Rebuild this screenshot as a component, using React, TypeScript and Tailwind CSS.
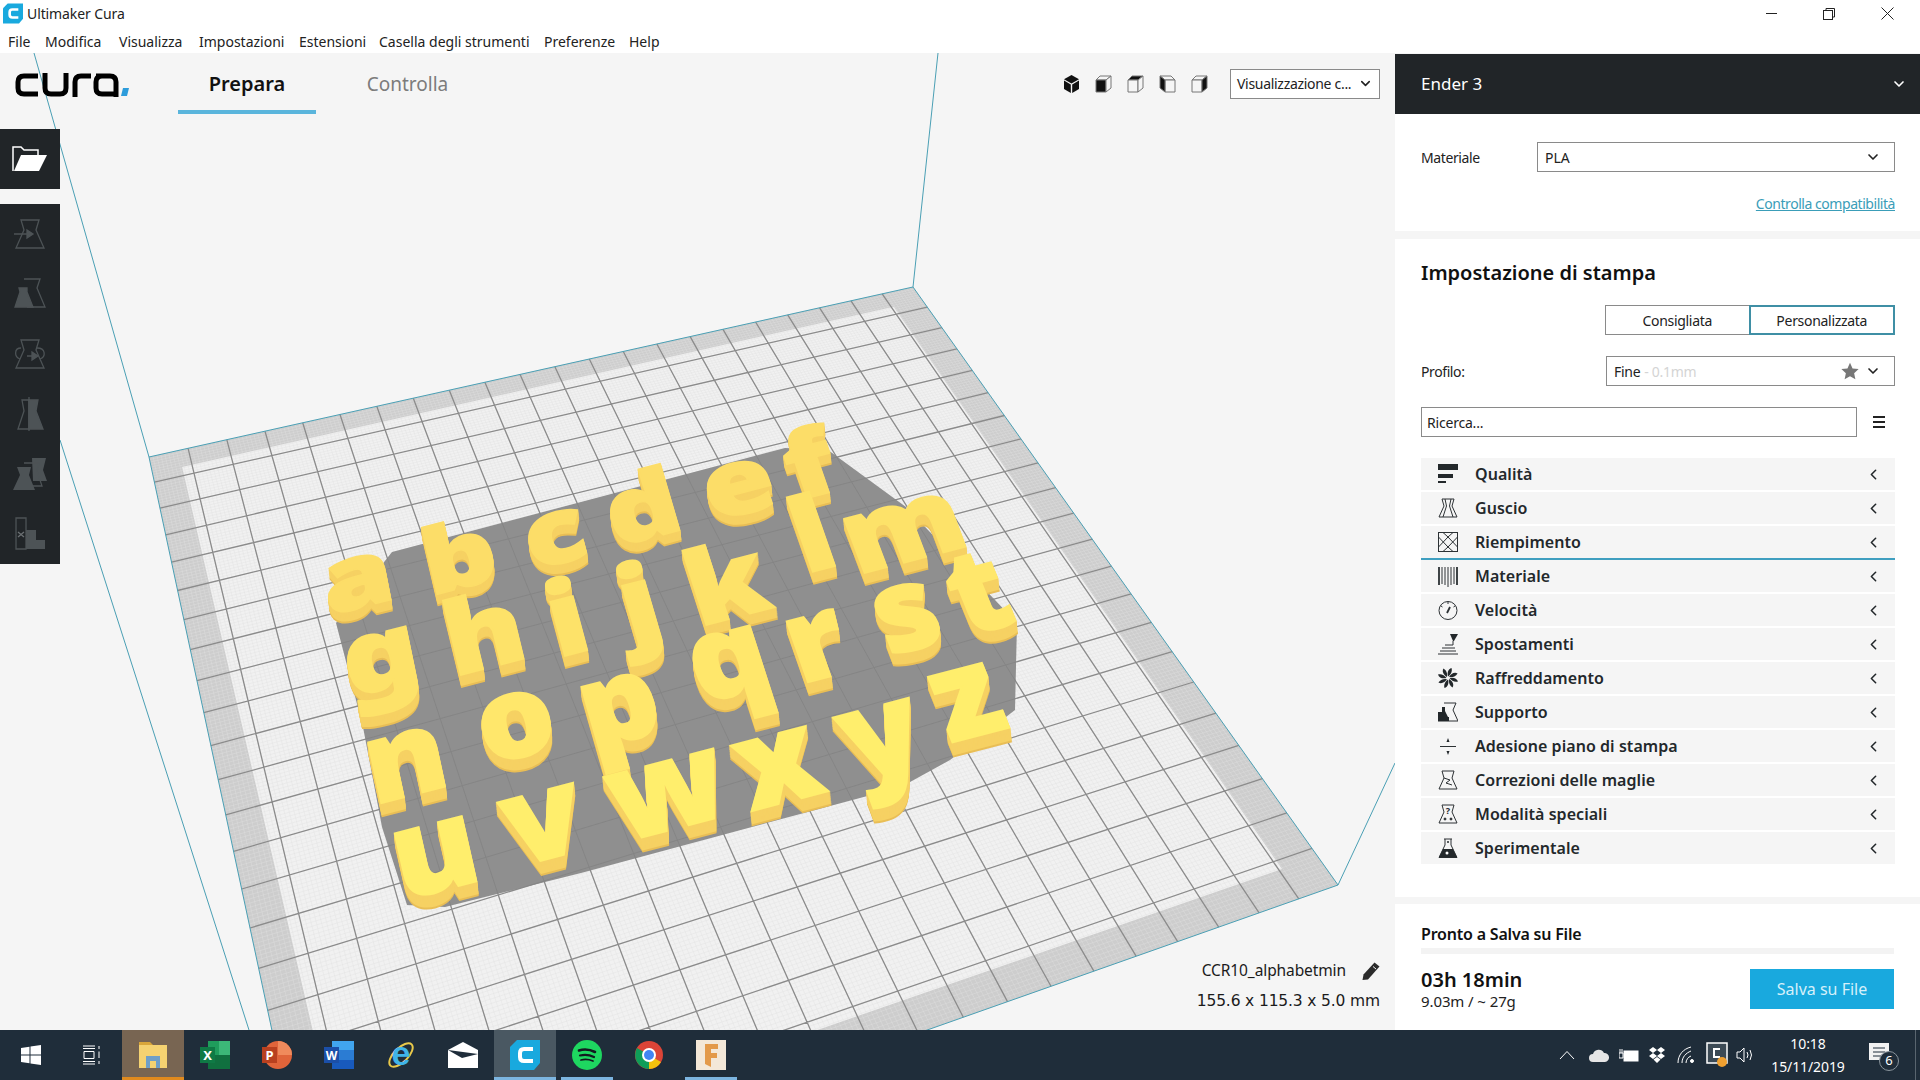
import { ChevronDown, ChevronLeft } from "lucide-react";
import type { ReactNode } from "react";

// bed corners as they land on the page: back-left, back-right, front-right, front-left
const BED = [[149, 457], [913, 287], [1338, 885], [318, 1245]];

function makeProject(q: number[][]) {
  const [[x0, y0], [x1, y1], [x2, y2], [x3, y3]] = q;
  const dx1 = x1 - x2, dx2 = x3 - x2, sx = x0 - x1 + x2 - x3;
  const dy1 = y1 - y2, dy2 = y3 - y2, sy = y0 - y1 + y2 - y3;
  const den = dx1 * dy2 - dx2 * dy1;
  const g = (sx * dy2 - dx2 * sy) / den;
  const h = (dx1 * sy - sx * dy1) / den;
  const a = x1 - x0 + g * x1, b = x3 - x0 + h * x3;
  const d = y1 - y0 + g * y1, e = y3 - y0 + h * y3;
  return (u: number, v: number) => {
    const w = g * u + h * v + 1;
    return [(a * u + b * v + x0) / w, (d * u + e * v + y0) / w];
  };
}
const project = makeProject(BED);

const quad = (u0: number, v0: number, u1: number, v1: number) =>
  [project(u0, v0), project(u1, v0), project(u1, v1), project(u0, v1)].map((p) => p.join(",")).join(" ");

const fine = Array.from({ length: 221 }, (_, i) => i / 220);
const major = Array.from({ length: 21 }, (_, i) => (i + 1) / 22);

const segment = (a: number[], b: number[]) => `M${a[0].toFixed(1)} ${a[1].toFixed(1)}L${b[0].toFixed(1)} ${b[1].toFixed(1)}`;
const finePath = fine.map((t) => segment(project(t, 0), project(t, 1)) + segment(project(0, t), project(1, t))).join("");
const majorPath = major.map((t) => segment(project(t, 0), project(t, 1)) + segment(project(0, t), project(1, t))).join("");

const SHADOW = "392,552 785,448 828,450 906,507 1017,623 1015,710 950,760 901,787 581,873 445,907 407,905 382,827 363,727 336,623";

type Letter = [string, number, number, number];
// char, x, y of the baseline on the top face, row
const LETTERS: Letter[] = [
  ["f", 820, 495, 0], ["e", 747, 513, 0], ["d", 651, 538, 0], ["c", 562, 563, 0], ["b", 466, 587, 0], ["a", 363, 607, 0],
  ["m", 915, 560, 1], ["l", 824, 569, 1], ["k", 737, 617, 1], ["j", 649, 637, 1], ["i", 576, 653, 1], ["h", 492, 667, 1], ["g", 387, 688, 1],
  ["t", 993, 629, 2], ["s", 919, 648, 2], ["r", 828, 677, 2], ["q", 739, 694, 2], ["p", 629, 740, 2], ["o", 524, 756, 2], ["n", 413, 795, 2],
  ["z", 981, 735, 3], ["y", 895, 773, 3], ["x", 790, 801, 3], ["w", 678, 828, 3], ["v", 552, 858, 3], ["u", 443, 890, 3],
];
const ROW_SX = [1.12, 1.16, 1.18, 1.24];
const ROW_SY = [0.88, 0.98, 1.1, 1.18];
const ROW_DEPTH = [11, 12, 13, 14];
const ROW_TOP = ["#fcdd68", "#fde269", "#ffe76b", "#ffee6c"];

function Letter({ l }: { l: Letter }) {
  const [ch, x, y, row] = l;
  const sx = ROW_SX[row], sy = ROW_SY[row];
  const shear = 0.2 + ((x - 365) / 614) * 0.2;
  const at = (off: number) => `matrix(${sx} ${-0.26 * sx} ${shear * sy} ${sy} ${x + off * 0.1} ${y + off})`;
  const depth = Array.from({ length: ROW_DEPTH[row] }, (_, i) => ROW_DEPTH[row] - i);
  return (
    <g fontFamily="'Noto Sans', sans-serif" fontWeight={900} fontSize={100} textAnchor="middle" strokeWidth={1.5} strokeLinejoin="miter">
      {depth.map((off) => {
        const c = off > ROW_DEPTH[row] - 2 ? "#e9be56" : "#f6d163";
        return <text key={off} transform={at(off)} fill={c} stroke={c}>{ch}</text>;
      })}
      <text transform={at(0)} fill={ROW_TOP[row]} stroke={ROW_TOP[row]}>{ch}</text>
    </g>
  );
}

function Scene() {
  return (
    <svg className="absolute left-0 -top-[53px]" width={1920} height={1080} viewBox="0 0 1920 1080">
      <defs>
        <clipPath id="shadow-clip"><polygon points={SHADOW} /></clipPath>
      </defs>
      <polygon points={BED.map((p) => p.join(",")).join(" ")} fill="#cdcdcd" />
      <polygon points={quad(0.034, 0.03, 0.958, 0.965)} fill="#f1f1f1" />
      <path d={finePath} stroke="#e0e0e0" strokeWidth={0.4} fill="none" />
      <path d={majorPath} stroke="#8b8b8b" strokeWidth={1.3} fill="none" />
      <polygon points={BED.map((p) => p.join(",")).join(" ")} fill="none" stroke="#4a9fb4" strokeWidth={1} />
      <path d="M149 457L34 53M913 287L938 53M1338 885L1395 763M60 440L249 1030" stroke="#4a9fb4" strokeWidth={1} fill="none" />
      <polygon points={SHADOW} fill="#8f8f8f" />
      <path d={majorPath} stroke="#858585" strokeWidth={1} fill="none" clipPath="url(#shadow-clip)" />
      {LETTERS.map((l) => <Letter key={l[0]} l={l} />)}
    </svg>
  );
}

function CuraLogo() {
  return (
    <svg width={116} height={24} viewBox="0 0 116 24" fill="none" stroke="#000" strokeWidth={5}>
      <path d="M23 3H9q-6 0-6 6v6q0 6 6 6H23" />
      <path d="M30 0v15q0 6 6 6h9q6 0 6-6V0" />
      <path d="M60 24V9q0-6 6-6h10" />
      <path d="M81 3h14q6 0 6 6v15M101 21H87q-6 0-6-6V9q0-6 6-6" />
      <path d="M108 15h6l-2 8h-6z" fill="#2d9cdb" stroke="none" />
    </svg>
  );
}

// the little print model shape used all over the side bars
const VASE = "M6 1H24L21 11L29 29H1L9 11Z";

function ToolIcon({ children }: { children: ReactNode }) {
  return (
    <div className="flex h-[60px] w-[60px] items-center justify-center">
      <svg width={34} height={34} viewBox="0 0 34 34" fill="none" stroke="#4d5356" strokeWidth={1.3}>{children}</svg>
    </div>
  );
}

function Toolbar() {
  return (
    <div className="ml-0 mt-[15px] flex w-[60px] flex-col gap-[15px]">
      <div className="flex h-[60px] items-center justify-center bg-[#212528]">
        <svg width={36} height={26} viewBox="0 0 36 26">
          <path d="M1 25V1h8l3 3h14v5" fill="none" stroke="#fff" strokeWidth={1.5} />
          <path d="M9 9H35L27 25H2Z" fill="#fff" />
        </svg>
      </div>
      <div className="flex h-[360px] flex-col bg-[#212528]">
        <ToolIcon>
          <path transform="translate(2 2)" d={VASE} />
          <path d="M1 17H19M14 13l6 4-6 4z" fill="#4d5356" />
        </ToolIcon>
        <ToolIcon>
          <path d="M11 2H27L24 11L32 30H14" />
          <path d="M6 11H14V15L20 30H2L7 15Z" fill="#4d5356" />
        </ToolIcon>
        <ToolIcon>
          <path transform="translate(2 2)" d={VASE} />
          <path d="M8 11C1 11 1 20 7 22M24 11C33 11 33 20 27 22" />
          <path d="M14 19H22M19 15l6 4-6 4z" fill="#4d5356" />
        </ToolIcon>
        <ToolIcon>
          <path d="M9 3H16V32H5L11 14Z" />
          <path d="M16 3H25L23 14L30 32H16Z" fill="#4d5356" />
          <path d="M16 0V34" />
        </ToolIcon>
        <ToolIcon>
          <path d="M19 1H33L30 13L34 24H20Z" fill="#4d5356" stroke="none" />
          <path d="M11 6H26L24 14L29 29H12" />
          <path d="M4 10H18L16 18L22 33H0L7 18Z" fill="#4d5356" stroke="none" />
        </ToolIcon>
        <ToolIcon>
          <path d="M3 1H13V32H3Z" />
          <path d="M13 13H23V23H32V32H13Z" fill="#4d5356" stroke="none" />
          <path d="M5 15l6 5M11 15l-6 5" stroke="#6b7073" />
        </ToolIcon>
      </div>
    </div>
  );
}

function ViewCube({ top, front, side, flip }: { top?: boolean; front?: boolean; side?: boolean; flip?: boolean }) {
  const on = "#111";
  const off = "#f5f5f5";
  return (
    <svg width={17} height={18} viewBox="0 0 17 18" stroke="#777" strokeWidth={1} className={flip ? "-scale-x-100" : ""}>
      <polygon points="1,5 5,1 16,1 11,5" fill={top ? on : off} />
      <polygon points="1,5 11,5 11,17 1,17" fill={front ? on : off} />
      <polygon points="11,5 16,1 16,13 11,17" fill={side ? on : off} />
    </svg>
  );
}

function ViewControls() {
  return (
    <div className="ml-auto flex h-[30px] items-center">
      <div className="mr-[22px] flex items-center gap-[15px]">
        <svg width={17} height={18} viewBox="0 0 17 18">
          <path d="M8.5 0L16 4.2L8.5 8.4L1 4.2Z" fill="#111" />
          <path d="M1 5.6L7.8 9.5V18L1 14Z" fill="#111" />
          <path d="M16 5.6L9.2 9.5V18L16 14Z" fill="#111" />
        </svg>
        <ViewCube front />
        <ViewCube top />
        <ViewCube side flip />
        <ViewCube side />
      </div>
      <div className="flex h-[30px] w-[150px] items-center justify-between border border-[#8a8a8a] bg-white pl-[6px] pr-[6px] text-[14px] tracking-[-0.3px] text-[#222]">
        <span>Visualizzazione c...</span>
        <ChevronDown size={15} strokeWidth={2.5} />
      </div>
    </div>
  );
}

function Viewport() {
  return (
    <div className="relative h-full w-[1395px] shrink-0 overflow-hidden bg-[#f5f5f5]">
      <Scene />
      <div className="relative flex h-full flex-col">
        <div className="flex h-[61px] items-center pr-[15px]">
          <div className="w-[178px] pl-[15px] pt-[2px]"><CuraLogo /></div>
          <div className="flex h-[61px] w-[138px] items-center justify-center border-b-4 border-[#5ab5dc] pt-[5px] text-[20px] font-semibold text-[#111]">Prepara</div>
          <div className="flex h-[61px] w-[183px] items-center justify-center pt-[5px] pb-1 text-[19px] text-[#7c7c7c]">Controlla</div>
          <ViewControls />
        </div>
        <Toolbar />
        <div className="mt-auto flex flex-col items-end pb-[19px] pr-[15px] text-[#1b1b1b]">
          <div className="mb-[5px] flex h-[30px] items-center gap-[16px]">
            <span className="text-[15.5px] tracking-[-0.1px]">CCR10_alphabetmin</span>
            <svg width={18} height={18} viewBox="0 0 18 18" fill="#2b2b2b">
              <path d="M12.5 0.5L17.5 4.5L6 17.5L0.5 18L1.5 12.5Z" />
              <path d="M11 4.5L14 7" stroke="#f5f5f5" strokeWidth={1} />
            </svg>
          </div>
          <span className="h-[20px] text-[15.5px] leading-[20px] [font-family:'DejaVu_Sans',sans-serif] tracking-[-0.15px]">155.6 x 115.3 x 5.0 mm</span>
        </div>
      </div>
    </div>
  );
}

const S = "#2c3134";
const SETTINGS: { name: string; icon: ReactNode }[] = [
  { name: "Qualità", icon: <g fill="#23282b" stroke="none"><rect x="0" y="0" width="20" height="6" /><rect x="0" y="10" width="15" height="4" /><rect x="0" y="17" width="8" height="2" /></g> },
  { name: "Guscio", icon: <><path d="M4 1H16L14 8L19 19H1L6 8Z" /><path d="M7 1L8.5 8L5 19M13 1L11.5 8L15 19" /></> },
  { name: "Riempimento", icon: <><rect x="0.5" y="0.5" width="19" height="19" /><path d="M0.5 5L10 15L19.5 5M0.5 15L10 5L19.5 15M5 0.5L10 5L15 0.5M5 19.5L10 15L15 19.5" /></> },
  { name: "Materiale", icon: <g><path d="M1 1V19M19 1V19" strokeWidth={1.8} /><path d="M4 1V18M7 1V19M10 1V21M13 1V19M16 1V18" /></g> },
  { name: "Velocità", icon: <><circle cx="10" cy="10.5" r="9" /><path d="M9 13L12 7" strokeWidth={1.8} /><path d="M10 2V4M3 6l1.5 1M17 6l-1.5 1" /></> },
  { name: "Spostamenti", icon: <><path d="M12 0H20L16 7H15Z" fill="#23282b" stroke="none" /><path d="M15 7V11H7M4 14H17M2 17H18M0 20H20" /></> },
  { name: "Raffreddamento", icon: <g fill="#23282b" stroke="none">{[0, 45, 90, 135, 180, 225, 270, 315].map((r) => <path key={r} transform={`rotate(${r} 10 10)`} d="M10 8.5C9 5 10 1 13.5 0C14.5 3 13 6.500 10 8.5Z" />)}</g> },
  { name: "Supporto", icon: <><path d="M6 1H18L15 8L20 19H11" /><path d="M0 19.5V10H4V5H7V9L10 15H11V19.5Z" fill="#23282b" stroke="none" /></> },
  { name: "Adesione piano di stampa", icon: <><path d="M2 10.5H18" /><path d="M10 2L11.5 6H8.5ZM10 19L11.5 15H8.5Z" fill="#23282b" stroke="none" /></> },
  { name: "Correzioni delle maglie", icon: <><path d="M4 1H16L14 8L19 19H1L6 8Z" /><path d="M6 8L12 10L8 13L14 15" /></> },
  { name: "Modalità speciali", icon: <><path d="M4 1H16L14 8L19 19H1L6 8Z" /><text x="10" y="10" textAnchor="middle" fontSize="9" fontWeight={700} fill="#23282b" stroke="none" fontFamily="'Noto Sans', sans-serif">?</text><circle cx="7" cy="15" r="1" fill="#23282b" /><circle cx="13" cy="15" r="1" fill="#23282b" /></> },
  { name: "Sperimentale", icon: <><path d="M6 1H14M7 1V7L1 19.5H19L13 7V1" /><path d="M5 11H15L19 19.5H1Z" fill="#23282b" stroke="none" /><circle cx="9" cy="15" r="1.5" fill="#fff" stroke="none" /><circle cx="10" cy="4" r="1" fill="#23282b" stroke="none" /></> },
];

function SettingRow({ name, icon, line }: { name: string; icon: ReactNode; line: boolean }) {
  return (
    <div className={`flex h-[34px] items-center bg-[#f5f5f5] pl-[17px] pr-[13px] border-b-2 ${line ? "border-[#3f9fc0]" : "border-white"}`}>
      <svg width={20} height={21} viewBox="0 0 20 21" fill="none" stroke={S} strokeWidth={1} className="shrink-0">{icon}</svg>
      <span className="ml-[17px] flex-1 text-[16px] font-semibold tracking-[0.05px] text-[#23282b]">{name}</span>
      <ChevronLeft size={17} strokeWidth={2.2} className="text-[#23282b]" />
    </div>
  );
}

function Field({ className, children }: { className: string; children: ReactNode }) {
  return <div className={`flex h-[30px] items-center border border-[#8a8a8a] bg-white ${className}`}>{children}</div>;
}

function Sidebar() {
  return (
    <div className="flex h-full flex-1 flex-col bg-[#f5f5f5] pt-px text-[#222]">
      <div className="flex h-[60px] items-center justify-between bg-[#212528] pl-[26px] pr-[13px] text-[17px] text-white">
        <span>Ender 3</span>
        <ChevronDown size={16} strokeWidth={2.5} />
      </div>
      <div className="h-[117px] bg-white pl-[26px] pr-[25px] pt-[28px]">
        <div className="flex items-center">
          <span className="w-[116px] text-[14px] tracking-[-0.4px]">Materiale</span>
          <Field className="flex-1 justify-between pl-[7px] pr-[13px] text-[14px]">
            <span>PLA</span>
            <ChevronDown size={16} strokeWidth={2.5} />
          </Field>
        </div>
        <div className="mt-[22px] text-right text-[14px] leading-[20px] tracking-[-0.45px] text-[#3a9db8] underline">Controlla compatibilità</div>
      </div>
      <div className="mt-2 h-[658px] bg-white pl-[26px] pr-[25px] pt-[19px]">
        <div className="h-[30px] text-[20px] font-semibold leading-[30px] text-[#111]">Impostazione di stampa</div>
        <div className="ml-auto mt-[17px] flex h-[30px] w-[290px] text-[14px] tracking-[-0.3px]">
          <div className="flex flex-1 items-center justify-center border border-r-0 border-[#8a8a8a]">Consigliata</div>
          <div className="flex flex-1 items-center justify-center border-2 border-[#3f8fa5]">Personalizzata</div>
        </div>
        <div className="mt-[21px] flex items-center justify-between">
          <span className="text-[14px] tracking-[-0.4px]">Profilo:</span>
          <Field className="w-[289px] pl-[7px] pr-[13px] text-[14px] tracking-[-0.3px]">
            <span>Fine</span>
            <span className="ml-1 text-[#d4d4d4]">- 0.1mm</span>
            <svg width={18} height={18} viewBox="0 0 24 24" fill="#777" className="ml-auto mr-[6px]"><path d="M12 1l3.4 7.5 8.1.9-6 5.5 1.7 8.1L12 18.9 4.8 23l1.7-8.1-6-5.5 8.1-.9z" /></svg>
            <ChevronDown size={16} strokeWidth={2.5} />
          </Field>
        </div>
        <div className="mt-[21px] flex items-center justify-between">
          <Field className="w-[436px] pl-[5px] text-[14px] tracking-[-0.2px]">Ricerca...</Field>
          <div className="mr-[10px] flex w-[12px] flex-col gap-[3px]">
            <div className="h-[2px] bg-[#222]" /><div className="h-[2px] bg-[#222]" /><div className="h-[2px] bg-[#222]" />
          </div>
        </div>
        <div className="mt-[21px]">
          {SETTINGS.map((s, i) => <SettingRow key={s.name} name={s.name} icon={s.icon} line={i === 2} />)}
        </div>
      </div>
      <div className="mt-[7px] flex-1 bg-white pl-[26px] pr-[26px] pt-[20px]">
        <div className="h-[20px] text-[16px] font-semibold leading-[20px] tracking-[-0.2px] text-[#111]">Pronto a Salva su File</div>
        <div className="mt-[4px] h-[6px] bg-[#f3f3f3]" />
        <div className="mt-[15px] flex items-start justify-between">
          <div className="-mt-px">
            <div className="h-[24px] text-[20px] font-semibold leading-[24px] text-[#111]">03h 18min</div>
            <div className="h-[18px] text-[15px] leading-[18px] tracking-[-0.1px]">9.03m / ~ 27g</div>
          </div>
          <div className="flex h-[40px] w-[144px] items-center justify-center bg-[#19a9de] text-[16px] text-[#d6f0fa]">Salva su File</div>
        </div>
      </div>
    </div>
  );
}

function TaskIcon({ children, bg, bar }: { children: ReactNode; bg?: string; bar?: string }) {
  return (
    <div className={`relative flex h-[50px] w-[62px] items-center justify-center ${bg ?? ""}`}>
      {children}
      {bar && <div className={`absolute bottom-0 h-[3px] ${bar}`} />}
    </div>
  );
}

function Taskbar() {
  return (
    <div className="flex h-[50px] shrink-0 items-center bg-[#1f2d3a] text-white">
      <div className="flex w-[61px] justify-center">
        <svg width={20} height={20} viewBox="0 0 20 20" fill="#fff"><path d="M0 3L8.5 1.7V9.5H0ZM9.5 1.5L20 0V9.5H9.5ZM0 10.5H8.5V18.3L0 17ZM9.5 10.5H20V20L9.5 18.5Z" /></svg>
      </div>
      <div className="flex w-[61px] justify-center">
        <svg width={20} height={20} viewBox="0 0 20 20" fill="none" stroke="#fff" strokeWidth={1}><path d="M1 1H13M1 3.5H13M2 6.5H12V13.5H2ZM1 16.5H13M1 19H13M17 1V4M17 6.5V13M17 16V19" /></svg>
      </div>
      <TaskIcon bg="bg-[#786552]" bar="inset-x-0 bg-[#e08a1e]">
        <svg width={28} height={26} viewBox="0 0 28 26">
          <path d="M0 0H11L14 3H0Z" fill="#d9a63a" />
          <rect x="0" y="3" width="28" height="23" fill="#f5d271" />
          <rect x="7" y="14" width="14" height="12" fill="#6f9fc8" />
          <rect x="11" y="19" width="6" height="7" fill="#f5d271" />
        </svg>
      </TaskIcon>
      <TaskIcon>
        <svg width={30} height={28} viewBox="0 0 30 28">
          <rect x="8" y="0" width="22" height="28" fill="#1f9d5c" />
          <rect x="19" y="0" width="11" height="14" fill="#3cb878" />
          <rect x="8" y="14" width="22" height="14" fill="#10703f" />
          <rect x="0" y="6" width="15" height="16" fill="#0f7a45" />
          <text x="7.5" y="19" textAnchor="middle" fontSize="13" fontWeight={700} fill="#fff" fontFamily="'Noto Sans', sans-serif">X</text>
        </svg>
      </TaskIcon>
      <TaskIcon>
        <svg width={30} height={30} viewBox="0 0 30 30">
          <circle cx="16" cy="15" r="14" fill="#e0643a" />
          <path d="M16 15V1A14 14 0 0 1 30 15Z" fill="#f08a5c" />
          <rect x="0" y="7" width="15" height="16" fill="#b8401f" />
          <text x="7.5" y="20" textAnchor="middle" fontSize="13" fontWeight={700} fill="#fff" fontFamily="'Noto Sans', sans-serif">P</text>
        </svg>
      </TaskIcon>
      <TaskIcon>
        <svg width={30} height={28} viewBox="0 0 30 28">
          <rect x="8" y="0" width="22" height="9" fill="#41a5ee" />
          <rect x="8" y="9" width="22" height="10" fill="#2b7cd3" />
          <rect x="8" y="19" width="22" height="9" fill="#185abd" />
          <rect x="0" y="6" width="15" height="16" fill="#1b4fa8" />
          <text x="7.5" y="19" textAnchor="middle" fontSize="12" fontWeight={700} fill="#fff" fontFamily="'Noto Sans', sans-serif">W</text>
        </svg>
      </TaskIcon>
      <TaskIcon>
        <svg width={30} height={30} viewBox="0 0 30 30">
          <ellipse cx="15" cy="15" rx="15" ry="7" transform="rotate(-45 15 15)" fill="none" stroke="#e9c94a" strokeWidth={2} />
          <text x="15" y="25" textAnchor="middle" fontSize="34" fontWeight={700} fill="#3fb4e8" fontFamily="'Liberation Sans', sans-serif">e</text>
        </svg>
      </TaskIcon>
      <TaskIcon>
        <svg width={30} height={26} viewBox="0 0 30 26">
          <path d="M0 8L15 0L30 8V26H0Z" fill="#fff" />
          <path d="M0 8L30 12L14 16Z" fill="#1f2d3a" />
        </svg>
      </TaskIcon>
      <TaskIcon bg="bg-[#4a5862]" bar="inset-x-0 bg-[#7cb5e0]">
        <svg width={30} height={30} viewBox="0 0 30 30">
          <path d="M7 0H30V23L24 30H0V7Z" fill="#19a9de" />
          <path d="M23 9H14q-4 0-4 4v4q0 4 4 4h9" fill="none" stroke="#fff" strokeWidth={4} />
        </svg>
      </TaskIcon>
      <TaskIcon bar="inset-x-[5px] bg-[#7cb5e0]">
        <svg width={30} height={30} viewBox="0 0 30 30" fill="none" stroke="#131a1f" strokeLinecap="round">
          <circle cx="15" cy="15" r="15" fill="#1ed760" stroke="none" />
          <path d="M7 10.5Q15 8 23 12" strokeWidth={2.6} />
          <path d="M8 15.5Q15 13.5 22 17" strokeWidth={2.2} />
          <path d="M9 20Q15 18.5 21 21" strokeWidth={1.8} />
        </svg>
      </TaskIcon>
      <TaskIcon>
        <svg width={28} height={30} viewBox="0 0 28 28">
          <circle cx="14" cy="14" r="14" fill="#db4437" />
          <path d="M14 14L26 21A14 14 0 0 1 14 28Z" fill="#f4c20d" />
          <path d="M14 14L14 28A14 14 0 0 1 2 7Z" fill="#0f9d58" />
          <circle cx="14" cy="14" r="7" fill="#fff" />
          <circle cx="14" cy="14" r="5" fill="#4285f4" />
        </svg>
      </TaskIcon>
      <TaskIcon bar="inset-x-[5px] bg-[#7cb5e0]">
        <svg width={30} height={30} viewBox="0 0 30 30">
          <rect width="30" height="30" fill="#f3e8d8" />
          <path d="M9 4H22V9H15V13H21V18H15V27L9 24Z" fill="#e39a4a" />
        </svg>
      </TaskIcon>
      <div className="ml-auto flex items-center">
        <div className="flex h-[50px] w-[30px] items-center justify-center pr-[4px]">
          <svg width={16} height={10} viewBox="0 0 16 10" fill="none" stroke="#fff"><path d="M1 9L8 1.5L15 9" /></svg>
        </div>
        <div className="flex w-[30px] justify-center">
          <svg width={20} height={14} viewBox="0 0 20 14"><path d="M4 14a4 4 0 0 1 0-8a6 6 0 0 1 11-1a4.500 4.500 0 0 1 1 9Z" fill="#e6e6e6" /></svg>
        </div>
        <div className="flex w-[30px] justify-center">
          <svg width={20} height={14} viewBox="0 0 20 14" fill="none" stroke="#fff"><rect x="5" y="3" width="14" height="10" fill="#fff" /><path d="M0 5H4V10H0ZM1 1V5M3 1V5" /></svg>
        </div>
        <div className="flex w-[26px] justify-center">
          <svg width={18} height={16} viewBox="0 0 18 16" fill="#fff"><path d="M5 0L9 3L5 6L1 3ZM13 0L17 3L13 6L9 3ZM5 6L9 9L5 12L1 9ZM13 6L17 9L13 12L9 9ZM9 10L12.500 12.500L9 16L5.500 12.500Z" /></svg>
        </div>
        <div className="flex w-[32px] justify-center">
          <svg width={18} height={18} viewBox="0 0 18 18" fill="none" stroke="#fff"><path d="M1 17C1 9 6 3 14 1M5 17C5 11 9 7 14 5M9 17C9 14 11 11 14 10" /><circle cx="15" cy="15" r="1.500" fill="#fff" /></svg>
        </div>
        <div className="relative flex w-[30px] justify-center">
          <svg width={22} height={26} viewBox="0 0 22 26"><rect x="1" y="1" width="20" height="20" fill="#3c4a55" stroke="#fff" strokeWidth={1.5} /><path d="M14 7H8v8h6" stroke="#fff" strokeWidth={2} fill="none" /><circle cx="16" cy="20" r="5" fill="#f0a030" /></svg>
        </div>
        <div className="flex w-[28px] justify-center">
          <svg width={20} height={16} viewBox="0 0 20 16" fill="none" stroke="#fff"><path d="M1 5H4L8 1V15L4 11H1ZM11 5Q13 8 11 11M14 3Q17 8 14 13" /></svg>
        </div>
        <div className="flex w-[96px] flex-col items-center text-[14px] leading-[23px] tracking-[-0.1px]">
          <span>10:18</span>
          <span>15/11/2019</span>
        </div>
        <div className="relative flex w-[46px] justify-center">
          <svg width={20} height={24} viewBox="0 0 20 24"><path d="M0 0H20V17H0Z" fill="#f2f2f2" /><path d="M4 5H16M4 9H16M4 13H12" stroke="#1f2d3a" /></svg>
          <div className="absolute left-[23px] top-[8px] flex h-[20px] w-[20px] items-center justify-center rounded-full border border-[#8a949c] bg-[#1f2d3a] text-[13px]">6</div>
        </div>
        <div className="ml-[13px] mr-[4px] h-[50px] w-px bg-[#59656f]" />
      </div>
    </div>
  );
}

const MENUS = [
  { label: "File", width: "w-[37px]" },
  { label: "Modifica", width: "w-[74px]" },
  { label: "Visualizza", width: "w-[80px]" },
  { label: "Impostazioni", width: "w-[100px]" },
  { label: "Estensioni", width: "w-[80px]" },
  { label: "Casella degli strumenti", width: "w-[165px]" },
  { label: "Preferenze", width: "w-[85px]" },
  { label: "Help", width: "w-[40px]" },
];

export default function App() {
  return (
    <div className="flex h-screen w-full flex-col overflow-hidden bg-white [font-family:'Noto_Sans',sans-serif]">
      <div className="flex h-[27px] shrink-0 items-center pl-[3px] text-[14px] text-[#222]">
        <svg width={20} height={21} viewBox="0 0 30 30" className="mr-[4px]">
          <path d="M7 0H30V23L24 30H0V7Z" fill="#19a9de" />
          <path d="M23 9H14q-4 0-4 4v4q0 4 4 4h9" fill="none" stroke="#fff" strokeWidth={4} />
        </svg>
        <span className="tracking-[-0.1px]">Ultimaker Cura</span>
        <div className="ml-auto flex items-center">
          <svg width={11} height={11} viewBox="0 0 11 11" stroke="#222" fill="none" className="mr-[46px]"><path d="M0 5.500H11" /></svg>
          <svg width={12} height={12} viewBox="0 0 12 12" stroke="#222" fill="none" className="mr-[46px]"><rect x="0.500" y="2.500" width="9" height="9" /><path d="M3 2.500V0.500H11.500V9H9.500" /></svg>
          <svg width={13} height={13} viewBox="0 0 13 13" stroke="#222" fill="none" className="mr-[26px]"><path d="M0.500 0.500L12.500 12.500M12.500 0.500L0.500 12.500" /></svg>
        </div>
      </div>
      <div className="flex h-[26px] shrink-0 items-center pl-[8px] pt-[2px] text-[14px] text-[#222]">
        {MENUS.map((m) => <span key={m.label} className={`${m.width} shrink-0`}>{m.label}</span>)}
      </div>
      <div className="flex min-h-0 flex-1">
        <Viewport />
        <Sidebar />
      </div>
      <Taskbar />
    </div>
  );
}
